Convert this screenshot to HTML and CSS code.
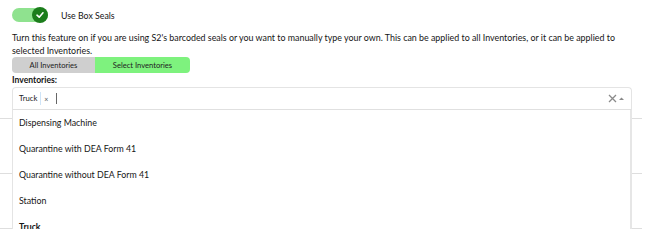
FILE: index.html
```html
<!DOCTYPE html>
<html>
<head>
<meta charset="utf-8">
<link rel="stylesheet" href="styles.css">
</head>
<body>
<div class="page">
  <div class="toggle-row">
    <span class="switch">
      <span class="knob">
        <svg width="10" height="10" viewBox="0 0 10 10"><path d="M2 5.2 L4.2 7.2 L8 2.8" fill="none" stroke="#fff" stroke-width="1.6" stroke-linecap="round" stroke-linejoin="round"/></svg>
      </span>
    </span>
    <span class="toggle-label">Use Box Seals</span>
  </div>
  <p class="desc">Turn this feature on if you are using S2's barcoded seals or you want to manually type your own. This can be applied to all Inventories, or it can be applied to selected Inventories.</p>
  <div class="btn-group">
    <button class="seg">All Inventories</button>
    <button class="seg active">Select Inventories</button>
  </div>
  <div class="field-label">Inventories:</div>
  <div class="select-wrap">
    <div class="select-control">
      <div class="values">
        <span class="chip"><span class="chip-text">Truck</span><span class="chip-x">×</span></span>
        <span class="cursor"></span>
      </div>
      <div class="indicators">
        <svg width="9" height="9" viewBox="0 0 9 9"><path d="M1 1 L8 8 M8 1 L1 8" stroke="#8a8a8a" stroke-width="1.3"/></svg>
        <svg width="5" height="3" viewBox="0 0 5 3"><path d="M0 3 L2.5 0.5 L5 3 Z" fill="#8a8a8a"/></svg>
      </div>
    </div>
    <div class="menu">
      <div class="option">Dispensing Machine</div>
      <div class="option">Quarantine with DEA Form 41</div>
      <div class="option">Quarantine without DEA Form 41</div>
      <div class="option">Station</div>
      <div class="option selected">Truck</div>
    </div>
    <div class="bg-rows">
      <div class="bg-row first"></div>
      <div class="bg-row"></div>
      <div class="bg-row"></div>
    </div>
  </div>
</div>
</body>
</html>
```
FILE: styles.css
```css
html, body {
  margin: 0;
  padding: 0;
  background: #fff;
}
body {
  font-family: "Lato", "Noto Sans", sans-serif;
  font-size: 8.8px;
  color: #151515;
}
.page {
  padding: 7px 0 0 12px;
  width: 630px;
}
.toggle-row {
  display: flex;
  align-items: center;
  height: 16px;
}
.switch {
  width: 36px;
  height: 14px;
  border-radius: 7px;
  background: #8fe28f;
  display: flex;
  justify-content: flex-end;
  align-items: center;
}
.knob {
  width: 16px;
  height: 16px;
  border-radius: 50%;
  background: #1c7d1c;
  display: flex;
  align-items: center;
  justify-content: center;
}
.toggle-label {
  margin-left: 13px;
}
.desc {
  margin: 8px 0 0 0;
  font-size: 8.9px;
  line-height: 13px;
  height: 26px;
  width: 612px;
}
.btn-group {
  display: flex;
  height: 16px;
}
.seg {
  font-family: inherit;
  font-size: 7.6px;
  height: 16px;
  border: none;
  padding: 0;
  margin: 0;
  color: #222;
  line-height: 16px;
}
.seg:first-child {
  width: 83px;
  background: #cfcfcf;
  border-radius: 4px 0 0 4px;
}
.seg.active {
  width: 95px;
  background: #7ef27e;
  border-radius: 0 4px 4px 0;
}
.field-label {
  font-weight: 700;
  font-size: 8.6px;
  line-height: 14px;
  height: 14px;
}
.select-wrap {
  position: relative;
  width: 620px;
}
.select-control {
  height: 21px;
  border: 1px solid #e4e4e4;
  border-bottom-color: #e0e0e0;
  border-radius: 4px 4px 0 0;
  display: flex;
  align-items: center;
  justify-content: space-between;
  padding: 0 7px 0 6px;
}
.values {
  display: flex;
  align-items: center;
}
.chip {
  display: flex;
  align-items: center;
  font-size: 7.7px;
  color: #222;
}
.chip-text {
  padding-right: 3px;
  border-right: 1px solid #cfe4f7;
  line-height: 13px;
}
.chip-x {
  padding: 0 3px 0 3px;
  font-size: 7px;
  color: #555;
}
.cursor {
  display: inline-block;
  width: 1px;
  height: 11px;
  background: #666;
  margin-left: 5px;
}
.indicators {
  display: flex;
  align-items: center;
  gap: 2px;
}
.menu {
  position: absolute;
  top: 23px;
  left: 0;
  right: 0;
  background: #fff;
  border-left: 1px solid #e4e4e4;
  border-right: 2px solid #e6e6e6;
  border-bottom: 1px solid #e0e0e0;
  z-index: 2;
}
.option {
  height: 26px;
  line-height: 26px;
  padding-left: 6px;
}
.option:last-child {
  height: 25px;
}
.option.selected {
  font-weight: 700;
}
.bg-rows {
  margin-left: -12px;
  width: 642px;
}
.bg-row {
  height: 54px;
  border-bottom: 1px solid #dedede;
}
.bg-row.first {
  height: 8px;
}
```
